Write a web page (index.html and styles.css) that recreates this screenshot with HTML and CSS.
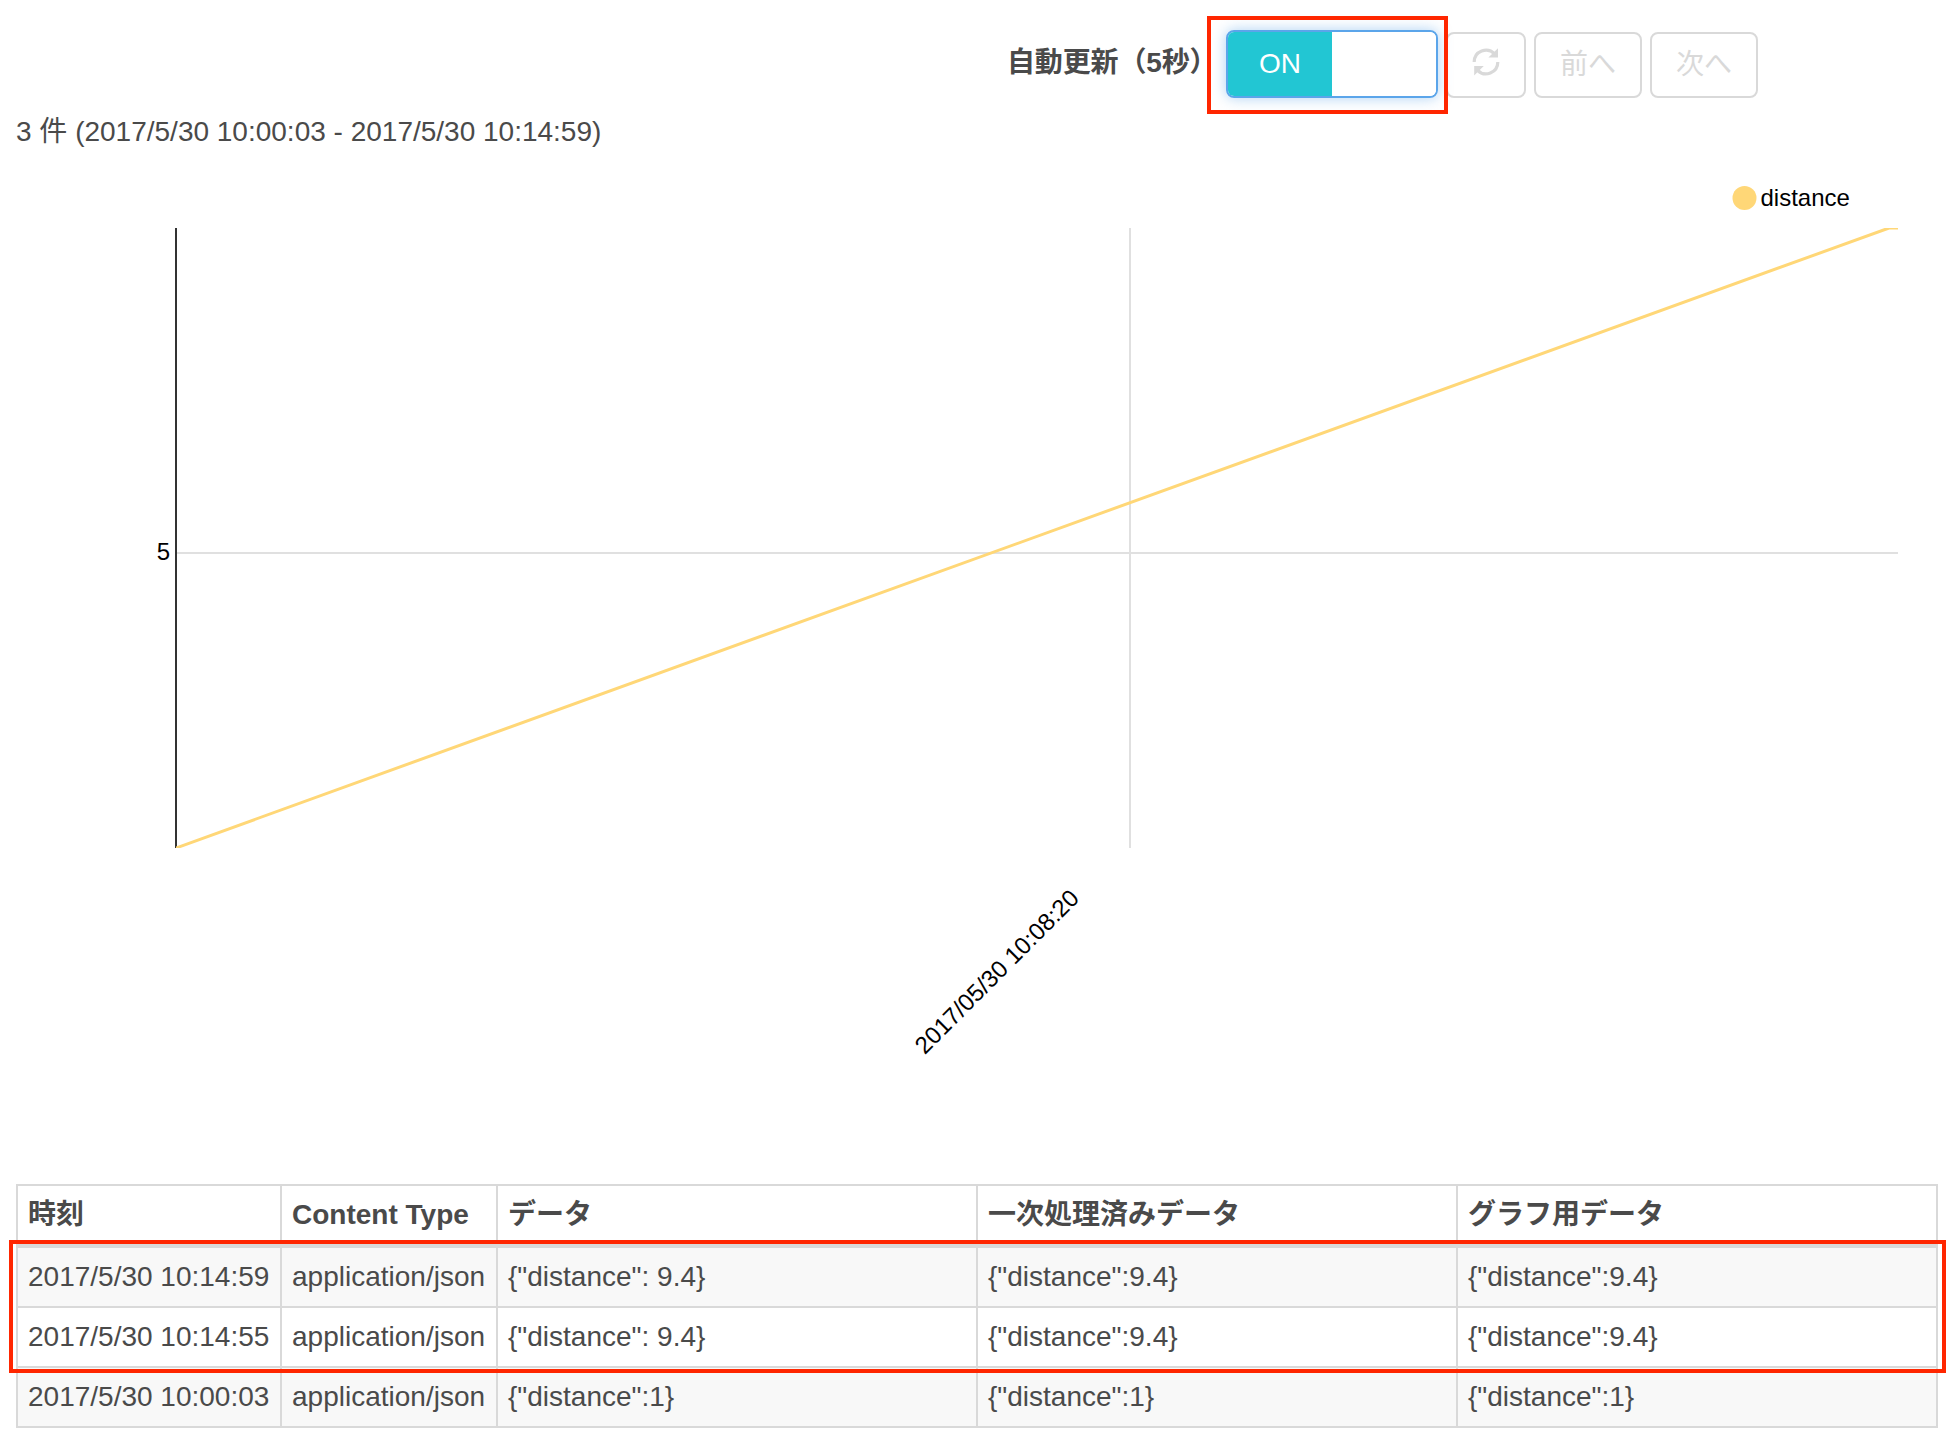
FILE: index.html
```html
<!DOCTYPE html>
<html lang="ja">
<head>
<meta charset="utf-8">
<title>distance</title>
<link rel="stylesheet" href="styles.css">
</head>
<body>
<header class="toolbar">
  <span class="toolbar-label">自動更新（5秒）</span>
  <div class="toggle-wrap">
    <div class="toggle"><span class="toggle-on">ON</span><span class="toggle-off"></span></div>
    <div class="highlight highlight-toggle"></div>
  </div>
  <button class="btn btn-refresh" disabled>
    <svg width="28" height="28" viewBox="0 0 28 28">
      <path d="M2.2 14A11.8 11.8 0 0 1 22.6 5.9M25.8 14A11.8 11.8 0 0 1 5.4 22.1" fill="none" stroke="currentColor" stroke-width="3.2"/>
      <path d="M26 .2V9.4H16.4ZM2.2 27.4V18H11.8Z" fill="currentColor"/>
    </svg>
  </button>
  <button class="btn btn-page" disabled>前へ</button>
  <button class="btn btn-page" disabled>次へ</button>
</header>
<p class="summary">3 件 (2017/5/30 10:00:03 - 2017/5/30 10:14:59)</p>
<svg class="chart" width="1926" height="1024" viewBox="16 160 1926 1024">
  <defs><clipPath id="plot"><rect x="176" y="228" width="1722" height="620"/></clipPath></defs>
  <path d="M176 553H1898M1130 228V848" stroke="#e0e0e0" stroke-width="2"/>
  <path d="M176 228V848" stroke="#333" stroke-width="2"/>
  <path d="M176 848L1889 228H1898" fill="none" stroke="#ffd777" stroke-width="3" clip-path="url(#plot)"/>
  <circle cx="1744.5" cy="198" r="12" fill="#ffd777"/>
  <text x="1760.5" y="206">distance</text>
  <text x="170" y="560" text-anchor="end">5</text>
  <text transform="translate(1080.5 899.5) rotate(-45)" text-anchor="end">2017/05/30 10:08:20</text>
</svg>
<div class="table-wrap">
  <table class="records">
    <colgroup><col class="col-time"><col class="col-type"><col><col><col></colgroup>
    <thead>
      <tr><th>時刻</th><th>Content Type</th><th>データ</th><th>一次処理済みデータ</th><th>グラフ用データ</th></tr>
    </thead>
    <tbody>
      <tr><td>2017/5/30 10:14:59</td><td>application/json</td><td>{"distance": 9.4}</td><td>{"distance":9.4}</td><td>{"distance":9.4}</td></tr>
      <tr><td>2017/5/30 10:14:55</td><td>application/json</td><td>{"distance": 9.4}</td><td>{"distance":9.4}</td><td>{"distance":9.4}</td></tr>
      <tr><td>2017/5/30 10:00:03</td><td>application/json</td><td>{"distance":1}</td><td>{"distance":1}</td><td>{"distance":1}</td></tr>
    </tbody>
  </table>
  <div class="highlight highlight-rows"></div>
</div>
</body>
</html>
```
FILE: styles.css
```css
* { box-sizing: border-box; }
body {
  margin: 0;
  padding: 30px 16px 0;
  background: #fff;
  color: #4a4a4a;
  font: 28px/40px "Liberation Sans", "Noto Sans CJK JP", sans-serif;
}
.toolbar {
  display: flex;
  align-items: flex-end;
  height: 68px;
  padding-left: 991px;
}
.toolbar-label {
  width: 219px;
  height: 55px;
  font-weight: bold;
  letter-spacing: -.15px;
  white-space: nowrap;
}
.toggle-wrap { position: relative; }
.toggle {
  display: flex;
  width: 212px;
  height: 68px;
  border: 2px solid #5ba5ea;
  border-radius: 8px;
  box-shadow: 0 0 14px rgba(91, 165, 234, .5);
  overflow: hidden;
}
.toggle-on {
  width: 104px;
  background: #22c6d3;
  color: #fff;
  line-height: 64px;
  text-align: center;
}
.toggle-off { flex: 1; background: #fff; }
.highlight { position: absolute; border: 4px solid #ff2600; }
.highlight-toggle { z-index: 1; left: -19px; top: -14px; width: 241px; height: 98px; }
.btn {
  height: 66px;
  padding: 0;
  border: 2px solid #d9d9d9;
  border-radius: 8px;
  background: #fff;
  color: #d9d9d9;
  font: inherit;
}
.btn svg { display: block; margin: -6px auto 0; }
.btn-refresh { width: 80px; margin-left: 8px; }
.btn-page { width: 108px; margin-left: 8px; padding-bottom: 1px; }
.summary { height: 62px; margin: 0; padding-top: 14px; }
.chart { display: block; fill: #000; font-size: 24px; }
.table-wrap { position: relative; width: 1922px; }
.records {
  width: 1922px;
  table-layout: fixed;
  border-collapse: separate;
  border-spacing: 0;
  border: solid #d9d9d9;
  border-width: 2px 0 0 2px;
}
.col-time { width: 264px; }
.col-type { width: 216px; }
.records th, .records td {
  height: 60px;
  padding: 0 10px;
  border: solid #d9d9d9;
  border-width: 0 2px 2px 0;
  text-align: left;
  white-space: nowrap;
}
.records th { height: 62px; border-bottom-width: 4px; }
.records tbody tr:nth-child(odd) { background: #f8f8f8; }
.highlight-rows { left: -7px; top: 56px; width: 1937px; height: 133px; }
```
